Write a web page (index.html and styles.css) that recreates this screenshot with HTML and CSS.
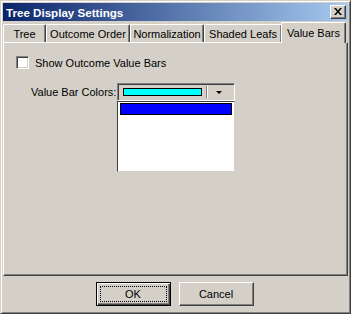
FILE: index.html
```html
<!DOCTYPE html>
<html>
<head>
<meta charset="utf-8">
<link rel="stylesheet" href="styles.css">
</head>
<body>
<div class="window">
  <div class="titlebar">
    <span class="title">Tree Display Settings</span>
    <span class="close">
      <svg width="8" height="7" viewBox="0 0 8 7"><path d="M0 0h2l2 2.5L6 0h2L5 3.5 8 7H6L4 4.5 2 7H0l3-3.5z" fill="#000"/></svg>
    </span>
  </div>
  <div class="tabs">
    <div class="tab t1">Tree</div>
    <div class="tab t2">Outcome Order</div>
    <div class="tab t3">Normalization</div>
    <div class="tab t4">Shaded Leafs</div>
    <div class="tab active">Value Bars</div>
  </div>
  <div class="panel">
    <div class="checkrow">
      <span class="checkbox"></span>
      <span class="label">Show Outcome Value Bars</span>
    </div>
    <div class="colorrow">
      <span class="label colorlabel">Value Bar Colors:</span>
      <div class="combo-wrap">
        <div class="combo">
          <span class="swatch cyan"></span>
          <span class="sep"></span>
          <span class="arrow"></span>
        </div>
        <div class="list">
          <div class="item blue"></div>
        </div>
      </div>
    </div>
  </div>
  <div class="buttons">
    <button class="btn default"><span class="focus">OK</span></button>
    <button class="btn">Cancel</button>
  </div>
</div>
</body>
</html>
```
FILE: styles.css
```css
* { box-sizing: border-box; }
html, body { margin: 0; padding: 0; }
body {
  width: 351px;
  height: 314px;
  background: #d4d0c8;
  font-family: "Liberation Sans", Arial, sans-serif;
  font-size: 11px;
  color: #000;
  overflow: hidden;
}
.window {
  width: 351px;
  height: 314px;
  background: #d4d0c8;
  border-top: 1px solid #d4d0c8;
  border-left: 1px solid #d4d0c8;
  border-right: 1px solid #404040;
  border-bottom: 1px solid #404040;
  box-shadow: inset 1px 1px 0 #fff, inset -1px -1px 0 #808080;
  padding: 2px;
  display: flex;
  flex-direction: column;
}
.titlebar {
  height: 18px;
  flex: none;
  background: linear-gradient(to right, #0a246a, #a6caf0);
  display: flex;
  align-items: center;
  justify-content: space-between;
  padding: 0 2px 0 3px;
}
.title {
  color: #fff;
  font-weight: bold;
  font-size: 11.6px;
}
.close {
  width: 16px;
  height: 14px;
  background: #d4d0c8;
  border: 1px solid;
  border-color: #fff #404040 #404040 #fff;
  box-shadow: inset -1px -1px 0 #808080;
  display: flex;
  align-items: center;
  justify-content: center;
  padding-bottom: 1px;
}
.tabs {
  display: flex;
  align-items: flex-end;
  height: 21px;
  flex: none;
}
.tab {
  height: 18px;
  display: flex;
  align-items: center;
  justify-content: center;
  border-top: 1px solid #fff;
  border-left: 1px solid #fff;
  border-right: 1px solid #404040;
  box-shadow: inset -1px 0 0 #808080;
  border-radius: 2px 2px 0 0;
  padding-top: 1px;
}
.t1 { width: 43px; }
.t2 { width: 84px; }
.t3 { width: 74px; }
.t4 { width: 78px; }
.tab.active {
  width: 65px;
  height: 21px;
  margin-left: -1px;
  margin-bottom: -1px;
  padding-bottom: 2px;
  position: relative;
  background: #d4d0c8;
  z-index: 1;
}
.panel {
  height: 234px;
  flex: none;
  border-left: 1px solid #fff;
  border-top: 1px solid #fff;
  border-right: 1px solid #404040;
  border-bottom: 1px solid #404040;
  box-shadow: inset -1px -1px 0 #808080;
  padding: 13px 0 0 12px;
}
.checkrow {
  display: flex;
  align-items: center;
  gap: 6px;
}
.checkbox {
  width: 13px;
  height: 13px;
  background: #fff;
  border: 1px solid;
  border-color: #808080 #fff #fff #808080;
  box-shadow: inset 1px 1px 0 #404040, inset -1px -1px 0 #d4d0c8;
}
.colorrow {
  display: flex;
  align-items: flex-start;
  margin-top: 14px;
  padding-left: 15px;
}
.colorlabel {
  width: 86px;
  margin-top: 3px;
}
.combo-wrap {
  width: 118px;
  display: flex;
  flex-direction: column;
}
.combo {
  height: 18px;
  border: 1px solid;
  border-color: #808080 #fff #fff #808080;
  box-shadow: inset 1px 1px 0 #404040, inset -1px -1px 0 #d4d0c8;
  display: flex;
  align-items: center;
  padding-left: 5px;
}
.swatch {
  width: 79px;
  height: 8px;
  border: 1px solid #000;
}
.cyan { background: #00ffff; }
.sep {
  width: 1px;
  height: 12px;
  margin-left: 4px;
  background: #808080;
  box-shadow: 1px 0 0 #fff;
}
.arrow {
  margin-left: 9px;
  width: 0;
  height: 0;
  border-left: 3px solid transparent;
  border-right: 3px solid transparent;
  border-top: 3px solid #000;
}
.list {
  height: 71px;
  background: #fff;
  border: 1px solid;
  border-color: #404040 #d4d0c8 #d4d0c8 #404040;
  padding: 1px 2px 0 2px;
}
.item {
  height: 12px;
  border: 1px solid #000;
}
.blue { background: #0000ff; }
.buttons {
  flex: 1;
  display: flex;
  justify-content: center;
  align-items: flex-start;
  gap: 8px;
  padding-top: 6px;
  padding-right: 2px;
}
.btn {
  width: 75px;
  height: 24px;
  font-family: "Liberation Sans", Arial, sans-serif;
  font-size: 11px;
  background: #d4d0c8;
  border: 1px solid;
  border-color: #fff #404040 #404040 #fff;
  box-shadow: inset -1px -1px 0 #808080;
  padding: 0;
  color: #000;
}
.btn.default {
  border: 1px solid #000;
  box-shadow: inset 1px 1px 0 #fff, inset -1px -1px 0 #404040, inset -2px -2px 0 #808080;
  padding: 3px;
}
.focus {
  display: block;
  width: 100%;
  height: 100%;
  border: 1px dotted #000;
  line-height: 14px;
}
```
